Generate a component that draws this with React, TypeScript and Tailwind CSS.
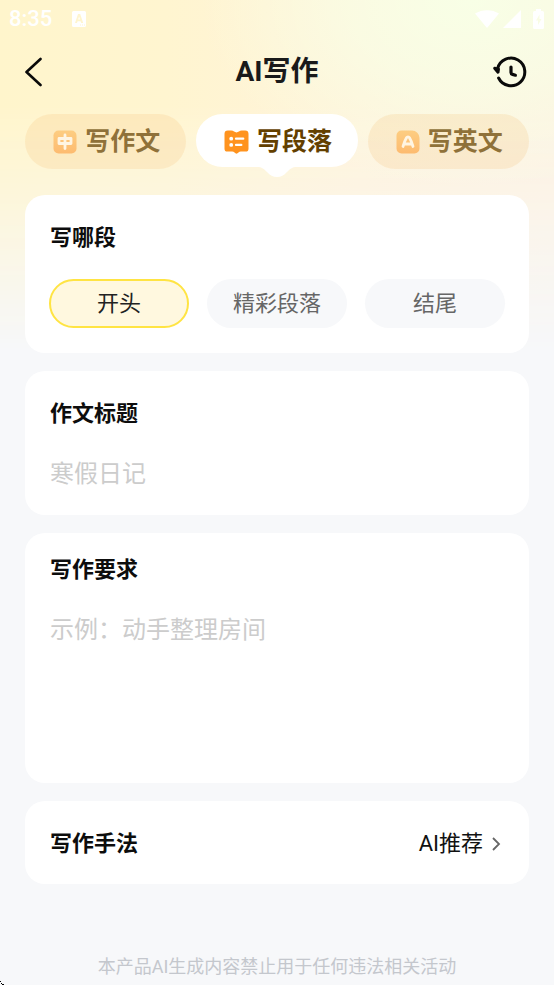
import React, { useState } from 'react';

type TabId = 'essay' | 'paragraph' | 'english';

interface Tab {
  id: TabId;
  label: string;
  icon: React.ReactNode;
}

const EssayIcon = () => (
  <svg className="w-6 h-6" viewBox="0 0 24 24" fill="none" aria-hidden="true">
    <defs>
      <linearGradient id="essay-fill" x1="0" y1="0" x2="0" y2="1">
        <stop offset="0" stopColor="#fdcd81" />
        <stop offset="1" stopColor="#fdbb70" />
      </linearGradient>
    </defs>
    <rect x="0.5" y="0.5" width="23" height="23" rx="5" fill="url(#essay-fill)" />
    <path d="M12 5v13.500M6 8.500h12v5H6z" stroke="#fff5e2" strokeWidth="2.800" strokeLinecap="round" strokeLinejoin="round" />
  </svg>
);

const ParagraphIcon = () => (
  <svg className="w-[25px] h-6" viewBox="0 0 26 25" fill="none" aria-hidden="true">
    <path
      d="M4 0.500h3.500c2.500 0 3.500 2 5.500 2s3-2 5.500-2H22a3.500 3.500 0 0 1 3.500 3.500v15.500a3 3 0 0 1-3 3h-5c-2 0-3 2.300-4.500 2.300s-2.500-2.300-4.500-2.300h-5a3 3 0 0 1-3-3V4A3.500 3.500 0 0 1 4 0.500z"
      fill="#ff931e"
    />
    <circle cx="7.500" cy="9" r="2" fill="#fff" />
    <circle cx="7.500" cy="15.500" r="2" fill="#fff" />
    <path d="M12.500 9h7.500M12.500 15.500h5.500" stroke="#fff" strokeWidth="2.400" strokeLinecap="round" />
  </svg>
);

const EnglishIcon = () => (
  <svg className="w-6 h-6" viewBox="0 0 24 24" fill="none" aria-hidden="true">
    <defs>
      <linearGradient id="english-fill" x1="0" y1="0" x2="0" y2="1">
        <stop offset="0" stopColor="#fdcd81" />
        <stop offset="1" stopColor="#fdbb70" />
      </linearGradient>
    </defs>
    <path d="M5.500 0.500H16a7.500 7.500 0 0 1 7.500 7.500v10.500a5 5 0 0 1-5 5h-13a5 5 0 0 1-5-5v-13a5 5 0 0 1 5-5z" fill="url(#english-fill)" />
    <path d="M7 16.500c1-3.500 2.200-6.500 3.500-8.700.7-1.200 2.300-1.200 3 0 1.300 2.200 2.500 5.200 3.500 8.700M9 14h6" stroke="#fff5e2" strokeWidth="2.800" strokeLinecap="round" strokeLinejoin="round" />
  </svg>
);

const tabs: Tab[] = [
  { id: 'essay', label: '写作文', icon: <EssayIcon /> },
  { id: 'paragraph', label: '写段落', icon: <ParagraphIcon /> },
  { id: 'english', label: '写英文', icon: <EnglishIcon /> },
];

const sections = ['开头', '精彩段落', '结尾'];

const StatusBar = () => (
  <div className="flex h-9 items-center justify-between pl-[9px] pr-[10px] pt-0.5 text-white">
    <div className="flex items-center gap-5">
      <span className="text-[22px] leading-6 font-medium">8:35</span>
      <svg className="w-[15px] h-4" viewBox="0 0 15 16" aria-hidden="true">
        <path fillRule="evenodd" fill="currentColor" d="M1.500 0h11A1.500 1.500 0 0 1 14 1.500v13a1.500 1.500 0 0 1-1.500 1.500h-11A1.500 1.500 0 0 1 0 14.500v-13A1.500 1.500 0 0 1 1.500 0zM6 3l-3 9h2l.6-1.800h3L9.200 12h2L8.200 3zm1.100 2.500l1 3h-2zM8 13.500v1h1v-1zm2 0v1h1v-1zm2 0v1h1v-1z" />
      </svg>
    </div>
    <div className="flex items-center">
      <svg className="w-6 h-5" viewBox="0 0 24 20" fill="currentColor" aria-hidden="true">
        <path d="M0 4.500C7 0 17 0 24 4.500L12 19z" />
      </svg>
      <svg className="ml-1 w-[18px] h-5" viewBox="0 0 18 20" fill="currentColor" aria-hidden="true">
        <path d="M18 1v18H0z" />
      </svg>
      <svg className="ml-3 w-[11px] h-5" viewBox="0 0 11 20" aria-hidden="true">
        <path fillRule="evenodd" fill="currentColor" d="M3 0h5v2h1.500A1.500 1.500 0 0 1 11 3.500v15A1.500 1.500 0 0 1 9.500 20h-8A1.500 1.500 0 0 1 0 18.500v-15A1.500 1.500 0 0 1 1.500 2H3zm3.500 5.500L3 11.500h2v4.500l3.500-6h-2z" />
      </svg>
    </div>
  </div>
);

const Header = () => (
  <header className="flex h-[72px] items-center justify-between px-[25px]">
    <button type="button" aria-label="返回" className="flex w-9 justify-start">
      <svg className="w-[18px] h-[30px]" viewBox="0 0 18 30" fill="none" aria-hidden="true">
        <path d="M15.500 2L1.500 15l14 13" stroke="#0a0a0a" strokeWidth="2.600" strokeLinecap="round" strokeLinejoin="round" />
      </svg>
    </button>
    <h1 className="text-[28px] leading-9 font-bold text-[#1a1a1a]">AI写作</h1>
    <button type="button" aria-label="历史记录" className="flex w-9 justify-end">
      <svg className="w-9 h-8" viewBox="0 0 36 32" fill="none" aria-hidden="true">
        <path d="M4.600 12.600A13.800 13.800 0 1 1 5.600 22" stroke="#0a0a0a" strokeWidth="3" strokeLinecap="round" />
        <path d="M1.700 12.300l3.300 3.900.5-3z" fill="#0a0a0a" stroke="#0a0a0a" strokeWidth="3" strokeLinejoin="round" />
        <path d="M18 11V16.500q0 1.500 1.500 1.900l2.900.8" stroke="#0a0a0a" strokeWidth="3.200" strokeLinecap="round" strokeLinejoin="round" />
      </svg>
    </button>
  </header>
);

interface TabButtonProps {
  tab: Tab;
  active: boolean;
  onClick: () => void;
}

const TabButton: React.FC<TabButtonProps> = ({ tab, active, onClick }) => (
  <button
    type="button"
    role="tab"
    aria-selected={active}
    onClick={onClick}
    className={
      active
        ? 'relative flex h-[53px] items-center justify-center gap-2 rounded-full bg-white pt-0.5 pl-0.5 text-[#633f00]'
        : 'relative flex h-[55px] items-center justify-center gap-2 rounded-full bg-[#f3b866]/18 pl-0.5 text-[#8f7139]'
    }
  >
    {tab.icon}
    <span className="text-[25px] leading-9 font-bold">{tab.label}</span>
    {active && (
      <svg className="absolute top-full left-1/2 w-10 h-[11px] -translate-x-1/2 -mt-px" viewBox="0 0 40 11" aria-hidden="true">
        <path d="M0 0h40v1c-5 0-7 2-10 5-3 3.500-6 5-10 5s-7-1.500-10-5C7 3 5 1 0 1z" fill="#fff" />
      </svg>
    )}
  </button>
);

const cardClass = 'rounded-[20px] bg-white px-6';
const titleClass = 'block pl-px text-[22px] leading-8 font-bold text-[#0d0d0d]';
const fieldClass =
  'mt-[26px] block w-full resize-none bg-transparent pl-px text-2xl leading-9 text-[#222] outline-none placeholder:text-[#cccccc]';

export default function App() {
  const [activeTab, setActiveTab] = useState<TabId>('paragraph');
  const [section, setSection] = useState('开头');

  return (
    <div
      lang="zh-CN"
      className="relative min-h-screen bg-[#f7f8fa] font-[Roboto,'Noto_Sans_CJK_SC',sans-serif]"
    >
      {/* warm glow behind the header */}
      <div
        aria-hidden="true"
        className="absolute inset-x-0 top-0 h-[350px] bg-[radial-gradient(ellipse_270px_190px_at_85%_0%,#f8ffe6_0%,#f8ffe6aa_45%,#f8ffe600_100%),linear-gradient(to_right,#fff5cc_0%,#fff5d0_30%,#fff3da_65%,#fdf2e0_100%)] [mask-image:linear-gradient(to_bottom,black_0%,black_30%,#000000b3_55%,transparent_100%)]"
      />

      <div className="relative">
        <StatusBar />
        <Header />

        <div role="tablist" className="grid grid-cols-3 items-start gap-[10px] px-[25px] pt-1.5">
          {tabs.map((tab) => (
            <TabButton key={tab.id} tab={tab} active={tab.id === activeTab} onClick={() => setActiveTab(tab.id)} />
          ))}
        </div>

        <main className="mt-[26px] flex flex-col gap-[18px] px-[25px]">
          <section className={`${cardClass} pt-[27px] pb-[25px]`}>
            <h2 className={titleClass}>写哪段</h2>
            <div className="mt-[25px] grid grid-cols-3 gap-[18px]">
              {sections.map((name) => (
                <button
                  key={name}
                  type="button"
                  aria-pressed={name === section}
                  onClick={() => setSection(name)}
                  className={
                    name === section
                      ? 'h-[49px] rounded-full border-2 border-[#ffe443] bg-[#fff8df] text-[22px] leading-8 text-[#222]'
                      : 'h-[49px] rounded-full bg-[#f7f8fa] text-[22px] leading-8 text-[#666]'
                  }
                >
                  {name}
                </button>
              ))}
            </div>
          </section>

          <section className={`${cardClass} pt-[27px] pb-[23px]`}>
            <label htmlFor="title" className={titleClass}>作文标题</label>
            <input id="title" type="text" placeholder="寒假日记" className={`${fieldClass} h-9`} />
          </section>

          <section className={`${cardClass} pt-[21px] pb-[23px]`}>
            <label htmlFor="requirement" className={titleClass}>写作要求</label>
            <textarea id="requirement" placeholder="示例：动手整理房间" className={`${fieldClass} h-[148px]`} />
          </section>

          <button type="button" className={`${cardClass} flex h-[83px] items-center justify-between pt-0.5 text-left`}>
            <span className={titleClass}>写作手法</span>
            <span className="flex items-center gap-2 pr-1 text-[22px] leading-8 text-[#111]">
              AI推荐
              <svg className="w-[10px] h-4" viewBox="0 0 10 16" fill="none" aria-hidden="true">
                <path d="M2 2l6 6-6 6" stroke="#666" strokeWidth="1.800" />
              </svg>
            </span>
          </button>
        </main>

        <footer className="mt-[69px] text-center text-lg leading-7 text-[#c4c7cd]">
          本产品AI生成内容禁止用于任何违法相关活动
        </footer>
      </div>

      {/* clipped window corner */}
      <svg className="absolute bottom-0 left-0 w-1 h-1" viewBox="0 0 4 4" aria-hidden="true">
        <path d="M0 0h1v1H0zM1 2h1v1H1zM2 3h2v1H2z" fill="#000" />
      </svg>
    </div>
  );
}
